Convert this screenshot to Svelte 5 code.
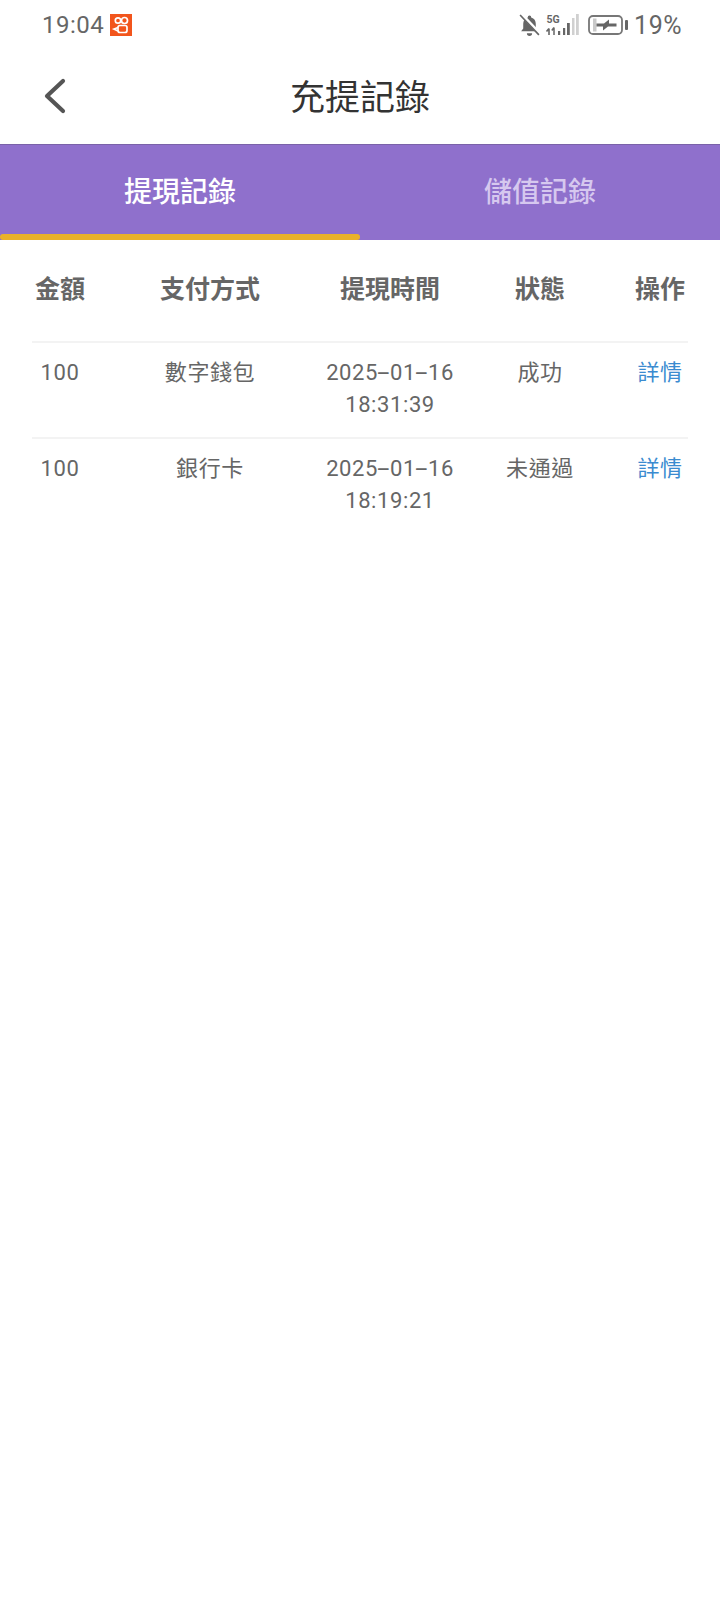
<script>
  const rows = [
    { amount: '100', method: '數字錢包', date: ['2025', '01', '16'], time: '18:31:39', status: '成功' },
    { amount: '100', method: '銀行卡', date: ['2025', '01', '16'], time: '18:19:21', status: '未通過' }
  ];
  const heads = ['金額', '支付方式', '提現時間', '狀態', '操作'];
</script>

<div class="page">
  <div class="status">
    <div class="left">
      <span class="clock">19:04</span>
      <svg width="22" height="22" viewBox="0 0 22 22">
        <rect width="22" height="22" fill="#f2551c" />
        <g fill="none" stroke="#fff" stroke-width="1.7">
          <circle cx="8" cy="6.5" r="2.7" />
          <circle cx="14.5" cy="6.5" r="3" />
          <rect x="8" y="11.5" width="9" height="7" rx="2" />
          <path d="M8 13.5 L4 15 L8 17" />
        </g>
      </svg>
    </div>
    <div class="right">
      <svg class="bell" width="21" height="23" viewBox="0 0 20 22">
        <path d="M10 1.5a1.6 1.6 0 0 1 1.6 1.8c3 .8 4.4 3.2 4.4 6v4.5l2 2.7H2l2-2.7V9.300c0-2.800 1.500-5.200 4.400-6A1.600 1.600 0 0 1 10 1.500z" fill="#666" />
        <path d="M7.500 18.500h5a2.500 2.500 0 0 1-5 0z" fill="#666" />
        <path d="M2.500 0.500 L19.500 18.500" stroke="#fff" stroke-width="3.200" />
        <path d="M1 1 L19 20" stroke="#666" stroke-width="1.600" />
      </svg>
      <svg class="signal" width="34" height="22" viewBox="0 0 34 22">
        <text x="1.500" y="9" class="five">5G</text>
        <path d="M4 14.500v6.500M1.500 17.500l2.500-3" stroke="#666" stroke-width="1.600" fill="none" />
        <path d="M9 13.500v7.500M6.800 16.500l2.200-3" stroke="#666" stroke-width="1.500" fill="none" />
        <rect x="13" y="17" width="2.200" height="4" fill="#666" />
        <rect x="18" y="14" width="2.200" height="7" fill="#666" />
        <rect x="22" y="9" width="2.800" height="12" fill="#666" />
        <rect x="27" y="4" width="2.500" height="17" fill="#d0d0d0" />
        <rect x="31" y="0" width="2.800" height="21" fill="#d0d0d0" />
      </svg>
      <svg class="batt" width="40" height="20" viewBox="0 0 40 20">
        <rect x="1" y="1" width="33" height="18" rx="4" fill="none" stroke="#777" stroke-width="1.800" />
        <rect x="5" y="3.500" width="3.500" height="13" fill="#c9c9c9" />
        <path d="M8.500 8.500 H16 L21 4.500 V8.500 H28.500 V11.500 H20 L15 15.500 V11.500 H8.500 Z" fill="#666" />
        <rect x="37" y="5" width="3" height="10" rx="1" fill="#666" />
      </svg>
      <span class="pct">19%</span>
    </div>
  </div>

  <header class="bar">
    <svg class="back" width="24" height="36" viewBox="0 0 24 36">
      <path d="M20 3 L4 18 L20 33" fill="none" stroke="#555" stroke-width="4.200" stroke-linecap="round" stroke-linejoin="round" />
    </svg>
    <h1>充提記錄</h1>
  </header>

  <nav class="tabs">
    <div class="tab active">提現記錄</div>
    <div class="tab">儲值記錄</div>
  </nav>

  <section class="table">
    <div class="row head">
      {#each heads as h}
        <div class="cell">{h}</div>
      {/each}
    </div>
    {#each rows as r}
      <div class="row body">
        <div class="cell">{r.amount}</div>
        <div class="cell">{r.method}</div>
        <div class="cell">{r.date[0]}<span class="dash">-</span>{r.date[1]}<span class="dash">-</span>{r.date[2]}<br />{r.time}</div>
        <div class="cell">{r.status}</div>
        <div class="cell link">詳情</div>
      </div>
    {/each}
  </section>
</div>

<style>
  :global(body) {
    margin: 0;
    background: #fff;
  }
  .page {
    width: 720px;
    height: 1612px;
    overflow: hidden;
    background: #fff;
    font-family: Roboto, "Noto Sans CJK TC", sans-serif;
    color: #666;
  }
  .status {
    height: 48px;
    box-sizing: border-box;
    padding: 2px 38px 0 42px;
    display: flex;
    align-items: center;
    justify-content: space-between;
    color: #666;
    font-size: 24px;
    letter-spacing: 0.5px;
  }
  .left,
  .right {
    display: flex;
    align-items: center;
  }
  .left {
    gap: 6px;
  }
  .bell {
    margin-right: 5px;
  }
  .signal {
    margin-right: 9px;
  }
  .batt {
    margin-right: 6px;
  }
  .pct {
    font-size: 25px;
  }
  .five {
    font-size: 10.5px;
    font-weight: 700;
    fill: #666;
    letter-spacing: 0;
  }
  .bar {
    height: 96px;
    box-sizing: border-box;
    padding-bottom: 4px;
    display: flex;
    align-items: center;
    justify-content: center;
    position: relative;
  }
  .back {
    position: absolute;
    left: 43px;
    top: 30px;
  }
  h1 {
    margin: 0;
    font-size: 35px;
    font-weight: 400;
    color: #333;
  }
  .tabs {
    height: 96px;
    display: grid;
    grid-template-columns: 1fr 1fr;
    background: #8f70cc;
    border-top: 1px solid #7a62a8;
    box-sizing: border-box;
  }
  .tab {
    display: flex;
    align-items: center;
    justify-content: center;
    font-size: 28px;
    font-weight: 500;
    color: #d6c8ef;
    padding-bottom: 6px;
    position: relative;
  }
  .tab.active {
    color: #fff;
  }
  .tab.active::after {
    content: "";
    position: absolute;
    left: 0;
    right: 0;
    bottom: 0;
    height: 6px;
    border-radius: 3px;
    background: #e9b12a;
  }
  .table {
    margin: 0 32px;
  }
  .row {
    display: grid;
    grid-template-columns: 56px 244px 116px 184px 56px;
    justify-items: center;
    text-align: center;
    white-space: nowrap;
  }
  .head {
    height: 101px;
    box-sizing: border-box;
    padding-top: 31px;
    font-size: 25px;
    line-height: 38px;
    font-weight: 700;
    color: #666;
  }
  .body {
    height: 96px;
    box-sizing: border-box;
    border-top: 2px solid #f3f3f3;
    padding-top: 14px;
    font-size: 22px;
    line-height: 32px;
    letter-spacing: 0.6px;
    color: #666;
  }
  .dash {
    display: inline-block;
    width: 12px;
    text-align: center;
    transform: scaleX(2);
  }
  .link {
    color: #3b8bd0;
  }
</style>
